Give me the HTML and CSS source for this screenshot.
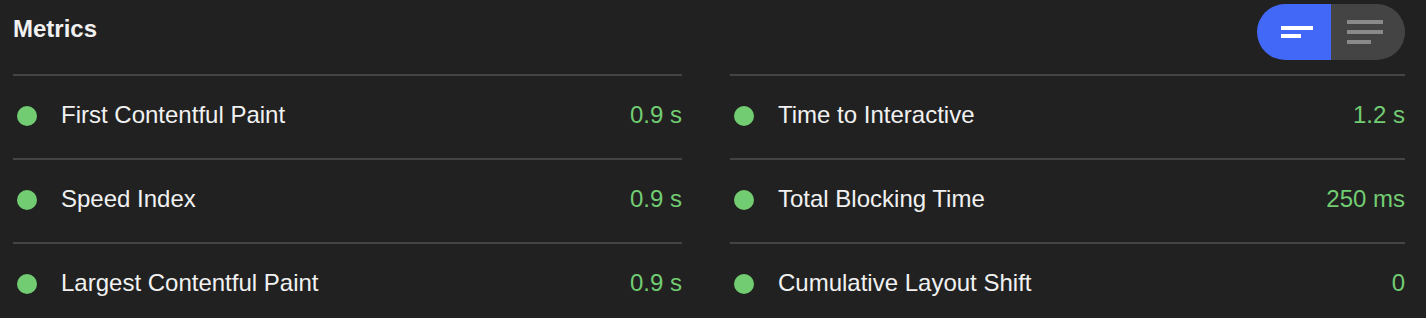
FILE: index.html
```html
<!DOCTYPE html>
<html lang="en">
<head>
<meta charset="utf-8">
<title>Metrics</title>
<link rel="stylesheet" href="styles.css">
</head>
<body>
<section class="metrics">
  <header class="metrics-header">
    <h2 class="metrics-title">Metrics</h2>
    <div class="toggle">
      <button class="toggle-btn toggle-btn--active" aria-label="Compact view">
        <svg class="icon-compact" width="32" height="12" viewBox="0 0 32 12"><rect x="0" y="0" width="32" height="4" fill="#fff"/><rect x="0" y="8" width="20" height="4" fill="#fff"/></svg>
      </button>
      <button class="toggle-btn" aria-label="Expanded view">
        <svg class="icon-expanded" width="36" height="24" viewBox="0 0 36 24"><rect x="0" y="0" width="36" height="4" fill="#8a8a8a"/><rect x="0" y="10" width="36" height="4" fill="#8a8a8a"/><rect x="0" y="20" width="24" height="4" fill="#8a8a8a"/></svg>
      </button>
    </div>
  </header>
  <div class="metrics-grid">
    <div class="metric"><span class="dot"></span><span class="metric-name">First Contentful Paint</span><span class="metric-value">0.9 s</span></div>
    <div class="metric"><span class="dot"></span><span class="metric-name">Time to Interactive</span><span class="metric-value">1.2 s</span></div>
    <div class="metric"><span class="dot"></span><span class="metric-name">Speed Index</span><span class="metric-value">0.9 s</span></div>
    <div class="metric"><span class="dot"></span><span class="metric-name">Total Blocking Time</span><span class="metric-value">250 ms</span></div>
    <div class="metric"><span class="dot"></span><span class="metric-name">Largest Contentful Paint</span><span class="metric-value">0.9 s</span></div>
    <div class="metric"><span class="dot"></span><span class="metric-name">Cumulative Layout Shift</span><span class="metric-value">0</span></div>
  </div>
</section>
</body>
</html>
```

FILE: styles.css
```css
html, body {
  margin: 0;
  padding: 0;
  background: #212121;
  color: #f1f1f1;
  font-family: "Liberation Sans", Arial, sans-serif;
  overflow: hidden;
}

.metrics {
  padding-left: 13px;
  width: 1392px;
}

.metrics-header {
  display: flex;
  justify-content: space-between;
  align-items: flex-start;
  padding-top: 4px;
  height: 70px;
}

.metrics-title {
  margin: 11px 0 0 0;
  font-size: 24px;
  line-height: 28px;
  font-weight: bold;
  color: #f1f1f1;
}

.toggle {
  display: flex;
  height: 56px;
  border-radius: 28px;
  overflow: hidden;
}

.toggle-btn {
  width: 74px;
  height: 56px;
  border: 0;
  padding: 0;
  margin: 0;
  background: #444444;
  display: flex;
  align-items: center;
  justify-content: center;
}

.toggle-btn--active {
  background: #4168f6;
}

.icon-compact {
  margin-left: 6px;
}

.icon-expanded {
  margin-right: 6px;
}

.metrics-grid {
  display: grid;
  grid-template-columns: 669px 675px;
  column-gap: 48px;
}

.metric {
  display: flex;
  align-items: center;
  height: 80px;
  padding-bottom: 2px;
  border-top: 2px solid #444444;
  font-size: 24px;
}

.dot {
  width: 20px;
  height: 20px;
  border-radius: 50%;
  background: #72cc72;
  margin-left: 4px;
  margin-right: 24px;
  flex: none;
}

.metric-name,
.metric-value {
  padding-bottom: 2px;
}

.metric-name {
  flex: 1;
  color: #f1f1f1;
}

.metric-value {
  color: #72cc72;
}
```
